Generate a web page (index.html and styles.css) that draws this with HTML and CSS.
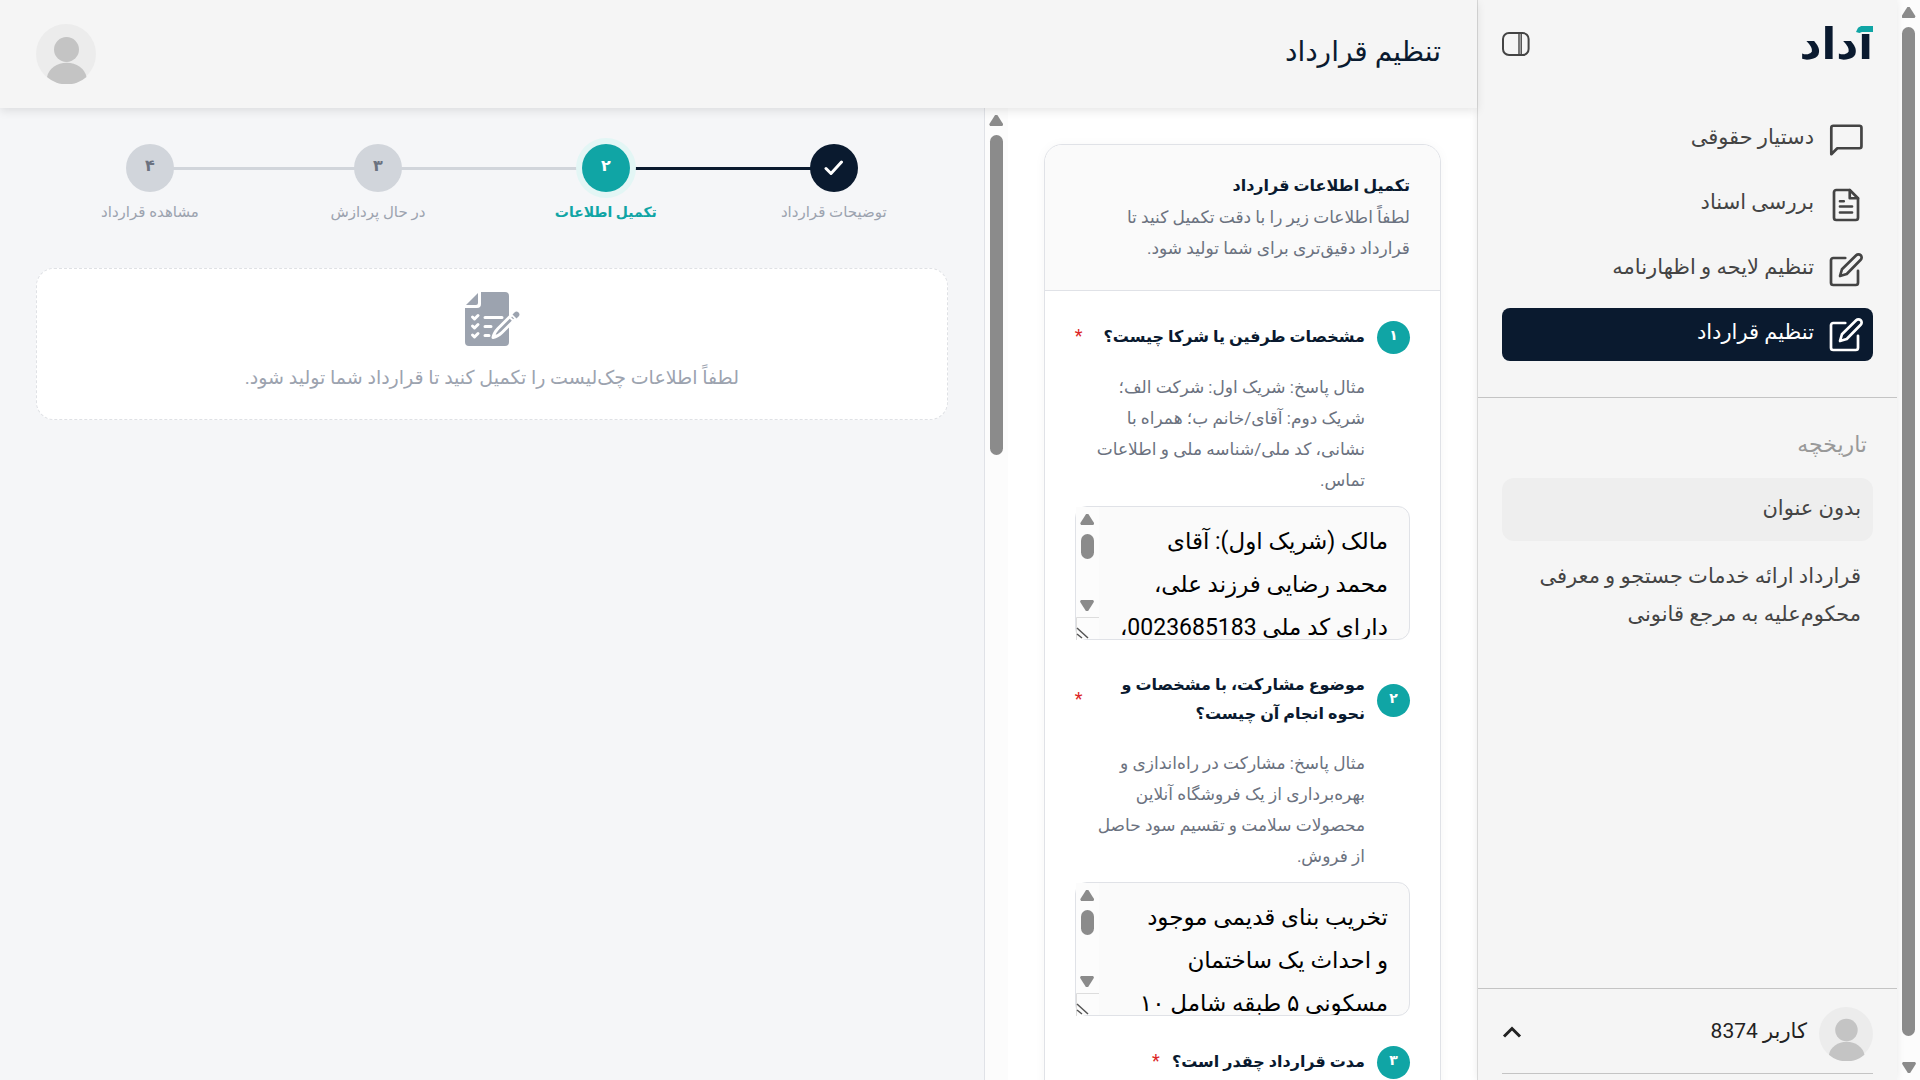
FILE: index.html
```html
<!DOCTYPE html>
<html lang="fa" dir="rtl">
  <head>
    <meta charset="UTF-8" />
    <meta name="viewport" content="width=device-width, initial-scale=1" />
    <title>تنظیم قرارداد</title>
    <link rel="stylesheet" href="styles.css">
  </head>
  <body>
    <div class="page">
      <div class="scrollbar page-scroll">
        <i class="up"></i>
        <i class="thumb"></i>
        <i class="down"></i>
      </div>

      <aside class="sidebar">
        <div class="brand">
          <a href="#" class="logo">آداد</a>
          <button type="button" class="toggle" aria-label="بستن منو">
            <svg width="28" height="24" viewBox="0 0 28 24" fill="none" stroke="#444" stroke-width="2">
              <rect x="1" y="1" width="25.6" height="22" rx="6" />
              <path d="M17 1v22M19.2 1v22" stroke-width="1.4" />
            </svg>
          </button>
        </div>

        <nav class="menu">
          <a href="#" class="menu-item">
            <svg class="icon" viewBox="0 0 24 24"><path d="M21 2.500H3.500a1.300 1.300 0 0 0-1.300 1.300V21.500l4-4H21a1.300 1.300 0 0 0 1.300-1.300V3.800A1.300 1.300 0 0 0 21 2.500z" /></svg>
            <span>دستیار حقوقی</span>
          </a>
          <a href="#" class="menu-item">
            <svg class="icon" viewBox="0 0 24 24"><path d="M14.500 2H5.500a1.500 1.500 0 0 0-1.500 1.500v17a1.500 1.500 0 0 0 1.500 1.500h13a1.500 1.500 0 0 0 1.500-1.500V7.500z" /><path d="M14.500 2v5.500H20M16 13H8M16 17H8M10.500 9.500H8" /></svg>
            <span>بررسی اسناد</span>
          </a>
          <a href="#" class="menu-item">
            <svg class="icon" viewBox="0 0 24 24"><path d="M11.500 4H3.500A1.500 1.500 0 0 0 2 5.500v15A1.500 1.500 0 0 0 3.500 22h15a1.500 1.500 0 0 0 1.500-1.500v-8" /><path d="M18.800 2.200a2.100 2.100 0 0 1 3 3L12.500 14.700 8 16l1.300-4.500z" /></svg>
            <span>تنظیم لایحه و اظهارنامه</span>
          </a>
          <a href="#" class="menu-item active">
            <svg class="icon" viewBox="0 0 24 24"><path d="M11.500 4H3.500A1.500 1.500 0 0 0 2 5.500v15A1.500 1.500 0 0 0 3.500 22h15a1.500 1.500 0 0 0 1.500-1.500v-8" /><path d="M18.800 2.200a2.100 2.100 0 0 1 3 3L12.500 14.700 8 16l1.300-4.500z" /></svg>
            <span>تنظیم قرارداد</span>
          </a>
        </nav>

        <div class="history">
          <h2 class="history-title">تاریخچه</h2>
          <a href="#" class="history-item active">بدون عنوان</a>
          <a href="#" class="history-item">قرارداد ارائه خدمات جستجو و معرفی محکوم‌علیه به مرجع قانونی</a>
        </div>

        <div class="user">
          <button type="button" class="user-row">
            <svg class="avatar" viewBox="0 0 60 60">
              <circle cx="30" cy="30" r="30" fill="#ececec" />
              <circle cx="30.500" cy="25.500" r="12.500" fill="#c4c4c4" />
              <path d="M11 53a20 17 0 0 1 39.500 0 30 30 0 0 1-39.500 0z" fill="#c4c4c4" />
            </svg>
            <span class="user-name">کاربر 8374</span>
            <svg width="20" height="18" viewBox="0 0 20 18" fill="none" stroke="#222" stroke-width="3"><path d="M2 11.500l8-8 8 8" /></svg>
          </button>
        </div>
      </aside>

      <div class="main">
        <header class="header">
          <h1 class="header-title">تنظیم قرارداد</h1>
          <svg class="avatar" viewBox="0 0 60 60">
            <circle cx="30" cy="30" r="30" fill="#ececec" />
            <circle cx="30.500" cy="25.500" r="12.500" fill="#c4c4c4" />
            <path d="M11 53a20 17 0 0 1 39.500 0 30 30 0 0 1-39.500 0z" fill="#c4c4c4" />
          </svg>
        </header>

        <div class="content">
          <section class="panel">
            <form class="card">
              <div class="card-head">
                <h2 class="card-title">تکمیل اطلاعات قرارداد</h2>
                <p class="card-text">لطفاً اطلاعات زیر را با دقت تکمیل کنید تا<br>قرارداد دقیق‌تری برای شما تولید شود.</p>
              </div>
              <div class="card-body">
                <div class="question">
                  <div class="question-head">
                    <span class="num">۱</span>
                    <label class="question-title" for="q1">مشخصات طرفین یا شرکا چیست؟</label>
                    <span class="star">*</span>
                  </div>
                  <p class="hint">مثال پاسخ: شریک اول: شرکت الف؛<br>شریک دوم: آقای/خانم ب؛ همراه با<br>نشانی، کد ملی/شناسه ملی و اطلاعات<br>تماس.</p>
                  <div class="field">
                    <textarea id="q1">مالک (شریک اول): آقای
محمد رضایی فرزند علی،
دارای کد ملی 0023685183،</textarea>
                    <div class="scrollbar field-scroll">
                      <i class="up"></i>
                      <i class="thumb"></i>
                      <i class="down"></i>
                      <svg class="grip" width="23" height="23" viewBox="0 0 23 23" fill="none" stroke="#555"><path d="M.500 23V.500H23" stroke="#ddd" /><path d="M1 11l11 10M1 17l5 4" stroke-width="1.500" /></svg>
                    </div>
                  </div>
                </div>

                <div class="question">
                  <div class="question-head">
                    <span class="num">۲</span>
                    <label class="question-title" for="q2">موضوع مشارکت، با مشخصات و<br>نحوه انجام آن چیست؟</label>
                    <span class="star">*</span>
                  </div>
                  <p class="hint">مثال پاسخ: مشارکت در راه‌اندازی و<br>بهره‌برداری از یک فروشگاه آنلاین<br>محصولات سلامت و تقسیم سود حاصل<br>از فروش.</p>
                  <div class="field">
                    <textarea id="q2">تخریب بنای قدیمی موجود
و احداث یک ساختمان
مسکونی ۵ طبقه شامل ۱۰</textarea>
                    <div class="scrollbar field-scroll">
                      <i class="up"></i>
                      <i class="thumb"></i>
                      <i class="down"></i>
                      <svg class="grip" width="23" height="23" viewBox="0 0 23 23" fill="none" stroke="#555"><path d="M.500 23V.500H23" stroke="#ddd" /><path d="M1 11l11 10M1 17l5 4" stroke-width="1.500" /></svg>
                    </div>
                  </div>
                </div>

                <div class="question">
                  <div class="question-head">
                    <span class="num">۳</span>
                    <label class="question-title fit" for="q3">مدت قرارداد چقدر است؟</label>
                    <span class="star">*</span>
                  </div>
                  <div class="field last">
                    <textarea id="q3"></textarea>
                  </div>
                </div>
              </div>
            </form>
            <div class="scrollbar panel-scroll">
              <i class="up"></i>
              <i class="thumb"></i>
            </div>
          </section>

          <section class="preview">
            <ol class="steps">
              <li class="step done">
                <span class="dot"><svg width="20" height="16" viewBox="0 0 20 16" fill="none" stroke="#fff" stroke-width="3" stroke-linecap="round" stroke-linejoin="round"><path d="M2 8.500l5 5L17.500 2" /></svg></span>
                <span class="step-label">توضیحات قرارداد</span>
              </li>
              <li class="step current">
                <span class="dot">۲</span>
                <span class="step-label">تکمیل اطلاعات</span>
              </li>
              <li class="step">
                <span class="dot">۳</span>
                <span class="step-label">در حال پردازش</span>
              </li>
              <li class="step">
                <span class="dot">۴</span>
                <span class="step-label">مشاهده قرارداد</span>
              </li>
            </ol>

            <div class="empty">
              <svg width="54" height="54" viewBox="0 0 54 54" overflow="visible">
                <path d="M16 0h24a4 4 0 0 1 4 4v46a4 4 0 0 1-4 4H4a4 4 0 0 1-4-4V16h12a4 4 0 0 0 4-4V0z" fill="#9ca3af" />
                <path d="M13 1v10a2 2 0 0 1-2 2H1z" fill="#9ca3af" />
                <path d="M7.500 25l2 2 3.500-3.500M7.500 34l2 2 3.500-3.500M7.500 43l2 2 3.500-3.500M20 25.500h17M20 34.500h6M20 43.500h4" fill="none" stroke="#fff" stroke-width="3" stroke-linecap="round" stroke-linejoin="round" />
                <path d="M46 23.500L33 36.500q-4 4-5 9 5-1 9-5L50 27.500" fill="#9ca3af" stroke="#fff" stroke-width="3" stroke-linecap="round" stroke-linejoin="round" />
                <path d="M44.500 25L49 29.500" stroke="#fff" stroke-width="2" />
                <path d="M47.500 22.500l2-2a2.800 2.800 0 0 1 4 4l-2 2z" fill="#9ca3af" />
              </svg>
              <p class="empty-text">لطفاً اطلاعات چک‌لیست را تکمیل کنید تا قرارداد شما تولید شود.</p>
            </div>
          </section>
        </div>
      </div>
    </div>
  </body>
</html>
```
FILE: styles.css
```css
* {
  margin: 0;
  padding: 0;
  box-sizing: border-box;
}

body {
  font-family: Roboto, "DejaVu Sans", sans-serif;
  font-size: 21px;
  color: #444;
  background-color: #fff;
}

a {
  color: inherit;
  text-decoration: none;
}

button {
  border: none;
  background: none;
  font: inherit;
  color: inherit;
}

.page {
  display: flex;
  height: 100vh;
  overflow: hidden;
}

/* scrollbars */
.scrollbar {
  display: flex;
  flex-direction: column;
  align-items: center;
  width: 23px;
  flex-shrink: 0;
  padding: 7px 0;
  background-color: #fcfcfc;
}
.scrollbar .up,
.scrollbar .down {
  width: 14px;
  height: 11px;
  flex-shrink: 0;
  background-color: #8b8b8b;
  clip-path: polygon(42% 0, 58% 0, 100% 85%, 94% 100%, 6% 100%, 0 85%);
}
.scrollbar .down {
  transform: rotate(180deg);
}
.scrollbar .thumb {
  width: 13px;
  border-radius: 7px;
  background-color: #8b8b8b;
}
.page-scroll .thumb {
  flex: 1;
  margin: 9px 0 26px;
}

/* sidebar */
.sidebar {
  width: 420px;
  flex-shrink: 0;
  display: flex;
  flex-direction: column;
  background-color: #f5f5f5;
  border-left: 1px solid #d9d9d9;
  box-shadow: 0 0 8px rgba(0, 0, 0, 0.08);
  position: relative;
}
.brand {
  display: flex;
  justify-content: space-between;
  align-items: center;
  height: 88px;
  padding: 0 24px;
}
.logo {
  font-family: "DejaVu Sans", sans-serif;
  font-size: 43px;
  font-weight: bold;
  line-height: 48px;
  color: transparent;
  /* the first alef starts below the teal cap */
  background: linear-gradient(transparent 14px, #0a1a2f 14px) right / 18px 100% no-repeat, linear-gradient(#0a1a2f, #0a1a2f) left / calc(100% - 18px) 100% no-repeat;
  -webkit-background-clip: text;
  background-clip: text;
  position: relative;
}
.logo::before {
  content: "";
  position: absolute;
  top: 6px;
  right: 0;
  width: 17px;
  height: 7px;
  background-color: #10a5a5;
  clip-path: polygon(30% 0, 100% 0, 100% 85%, 35% 85%, 20% 100%, 0 85%, 12% 25%);
}
.toggle {
  display: flex;
}

.menu {
  display: flex;
  flex-direction: column;
  gap: 12px;
  padding: 25px 24px 36px;
  border-bottom: 1px solid #c4c4c4;
}
.menu-item {
  display: flex;
  align-items: center;
  gap: 14px;
  height: 53px;
  padding: 0 9px 0 10px;
  border-radius: 8px;
}
.menu-item span {
  padding-bottom: 5px;
}
.menu-item.active {
  background-color: #0a1a2f;
  color: #fff;
}
.icon {
  width: 36px;
  height: 36px;
  fill: none;
  stroke: currentColor;
  stroke-width: 1.8;
  stroke-linejoin: round;
  stroke-linecap: round;
}

.history {
  flex: 1;
  padding: 28px 24px;
}
.history-title {
  padding: 0 6px;
  margin-bottom: 14px;
  font-size: 22px;
  font-weight: normal;
  line-height: 38px;
  color: #999;
}
.history-item {
  display: block;
  padding: 11px 12px 14px;
  margin-bottom: 5px;
  border-radius: 12px;
  line-height: 38px;
}
.history-item.active {
  background-color: #eee;
}

.user {
  height: 92px;
  padding: 18px 24px 0;
  border-top: 1px solid #c4c4c4;
}
.user-row {
  display: flex;
  align-items: center;
  width: 100%;
  height: 67px;
  padding-bottom: 12px;
  border-bottom: 1px solid #c4c4c4;
  color: #222;
}
.user-row .avatar {
  width: 54px;
  height: 54px;
}
.user-name {
  flex: 1;
  padding: 0 12px 7px;
  text-align: right;
}

/* main */
.main {
  flex: 1;
  min-width: 0;
  display: flex;
  flex-direction: column;
}
.header {
  display: flex;
  justify-content: space-between;
  align-items: center;
  height: 108px;
  flex-shrink: 0;
  padding: 0 36px;
  background-color: #f5f5f5;
  box-shadow: 0 3px 9px rgba(0, 0, 0, 0.1);
  position: relative;
}
.header-title {
  padding-bottom: 6px;
  font-size: 28px;
  font-weight: normal;
  color: #0a1a2f;
}
.header .avatar {
  width: 60px;
  height: 60px;
}

.content {
  flex: 1;
  min-height: 0;
  display: flex;
}

/* form */
.panel {
  width: calc(33.33% + 1px);
  flex-shrink: 0;
  display: flex;
  overflow: hidden;
  border-left: 1px solid #e0e2e7;
  background-color: #fff;
}
.card {
  flex: 1;
  min-width: 0;
  height: max-content;
  margin: 36px;
  border: 1px solid #e0e2e7;
  border-radius: 18px;
  box-shadow: 0 1px 12px rgba(0, 0, 0, 0.04);
}
.card-head {
  padding: 24px 30px 26px;
  border-bottom: 1px solid #e0e2e7;
  border-radius: 18px 18px 0 0;
  background-color: #fafafa;
}
.card-title {
  font-size: 16px;
  line-height: 33px;
  color: #0a1a2f;
}
.card-text,
.hint {
  font-size: 17px;
  line-height: 31px;
  color: #6b7280;
  white-space: nowrap;
}
.card-body {
  display: flex;
  flex-direction: column;
  gap: 30px;
  padding: 30px;
}
.question-head {
  display: flex;
  align-items: center;
  gap: 12px;
}
.num {
  width: 33px;
  height: 33px;
  flex-shrink: 0;
  border-radius: 50%;
  font-size: 14px;
  font-weight: bold;
  line-height: 29px;
  text-align: center;
  color: #fff;
  background-color: #10a5a5;
}
.question-title {
  flex: 1;
  padding-bottom: 2px;
  font-size: 16px;
  font-weight: bold;
  line-height: 29px;
  color: #0a1a2f;
  white-space: nowrap;
}
.question-title.fit {
  flex: none;
}
.star {
  padding-bottom: 4px;
  font-size: 18px;
  color: #dc2626;
}
.hint {
  padding-right: 45px;
  margin: 18px 0 10px;
}
.field {
  position: relative;
  display: flex;
}
.field.last {
  margin-top: 18px;
}
textarea {
  flex: 1;
  height: 134px;
  padding: 13px 21px 0 30px;
  border: 1px solid #e0e2e7;
  border-radius: 12px;
  background-color: #fafafa;
  font-family: inherit;
  font-size: 23px;
  line-height: 43px;
  color: #000;
  resize: none;
  overflow: hidden;
  white-space: pre;
}
.field-scroll {
  position: absolute;
  top: 1px;
  bottom: 1px;
  left: 1px;
}
.field-scroll .thumb {
  height: 25px;
  margin: 9px 0 41px;
  flex-shrink: 0;
}
.grip {
  flex-shrink: 0;
  margin-top: 6px;
}
.panel-scroll .thumb {
  height: 320px;
  margin-top: 9px;
}

/* preview */
.preview {
  flex: 1;
  min-width: 0;
  padding: 36px;
  background-color: #f5f6f8;
}
.steps {
  display: flex;
  list-style: none;
  margin-bottom: 40px;
}
.step {
  flex: 1;
  display: flex;
  flex-direction: column;
  align-items: center;
  gap: 4px;
  position: relative;
}
.step::before {
  content: "";
  position: absolute;
  top: 23px;
  right: 50%;
  width: 100%;
  height: 3px;
  background-color: #d1d5db;
}
.step:last-child::before {
  display: none;
}
.step.done::before {
  background-color: #0a1a2f;
}
.dot {
  display: flex;
  align-items: center;
  justify-content: center;
  width: 48px;
  height: 48px;
  padding-bottom: 6px;
  border-radius: 50%;
  font-size: 16px;
  font-weight: bold;
  color: #6b7280;
  background-color: #d1d5db;
  position: relative;
}
.step.done .dot {
  padding: 0;
  background-color: #0a1a2f;
}
.step.current .dot {
  color: #fff;
  background-color: #10a5a5;
  box-shadow: 0 0 0 6px #e3f6f5;
}
.step-label {
  font-size: 15px;
  line-height: 32px;
  color: #9ca3af;
}
.step.current .step-label {
  font-size: 14px;
  font-weight: bold;
  color: #10a5a5;
}

.empty {
  display: flex;
  flex-direction: column;
  align-items: center;
  gap: 14px;
  padding: 23px 24px;
  border: 1px dashed #dfe1e5;
  border-radius: 18px;
  background-color: #fff;
}
.empty-text {
  font-size: 19px;
  line-height: 36px;
  color: #9ca3af;
}
```
